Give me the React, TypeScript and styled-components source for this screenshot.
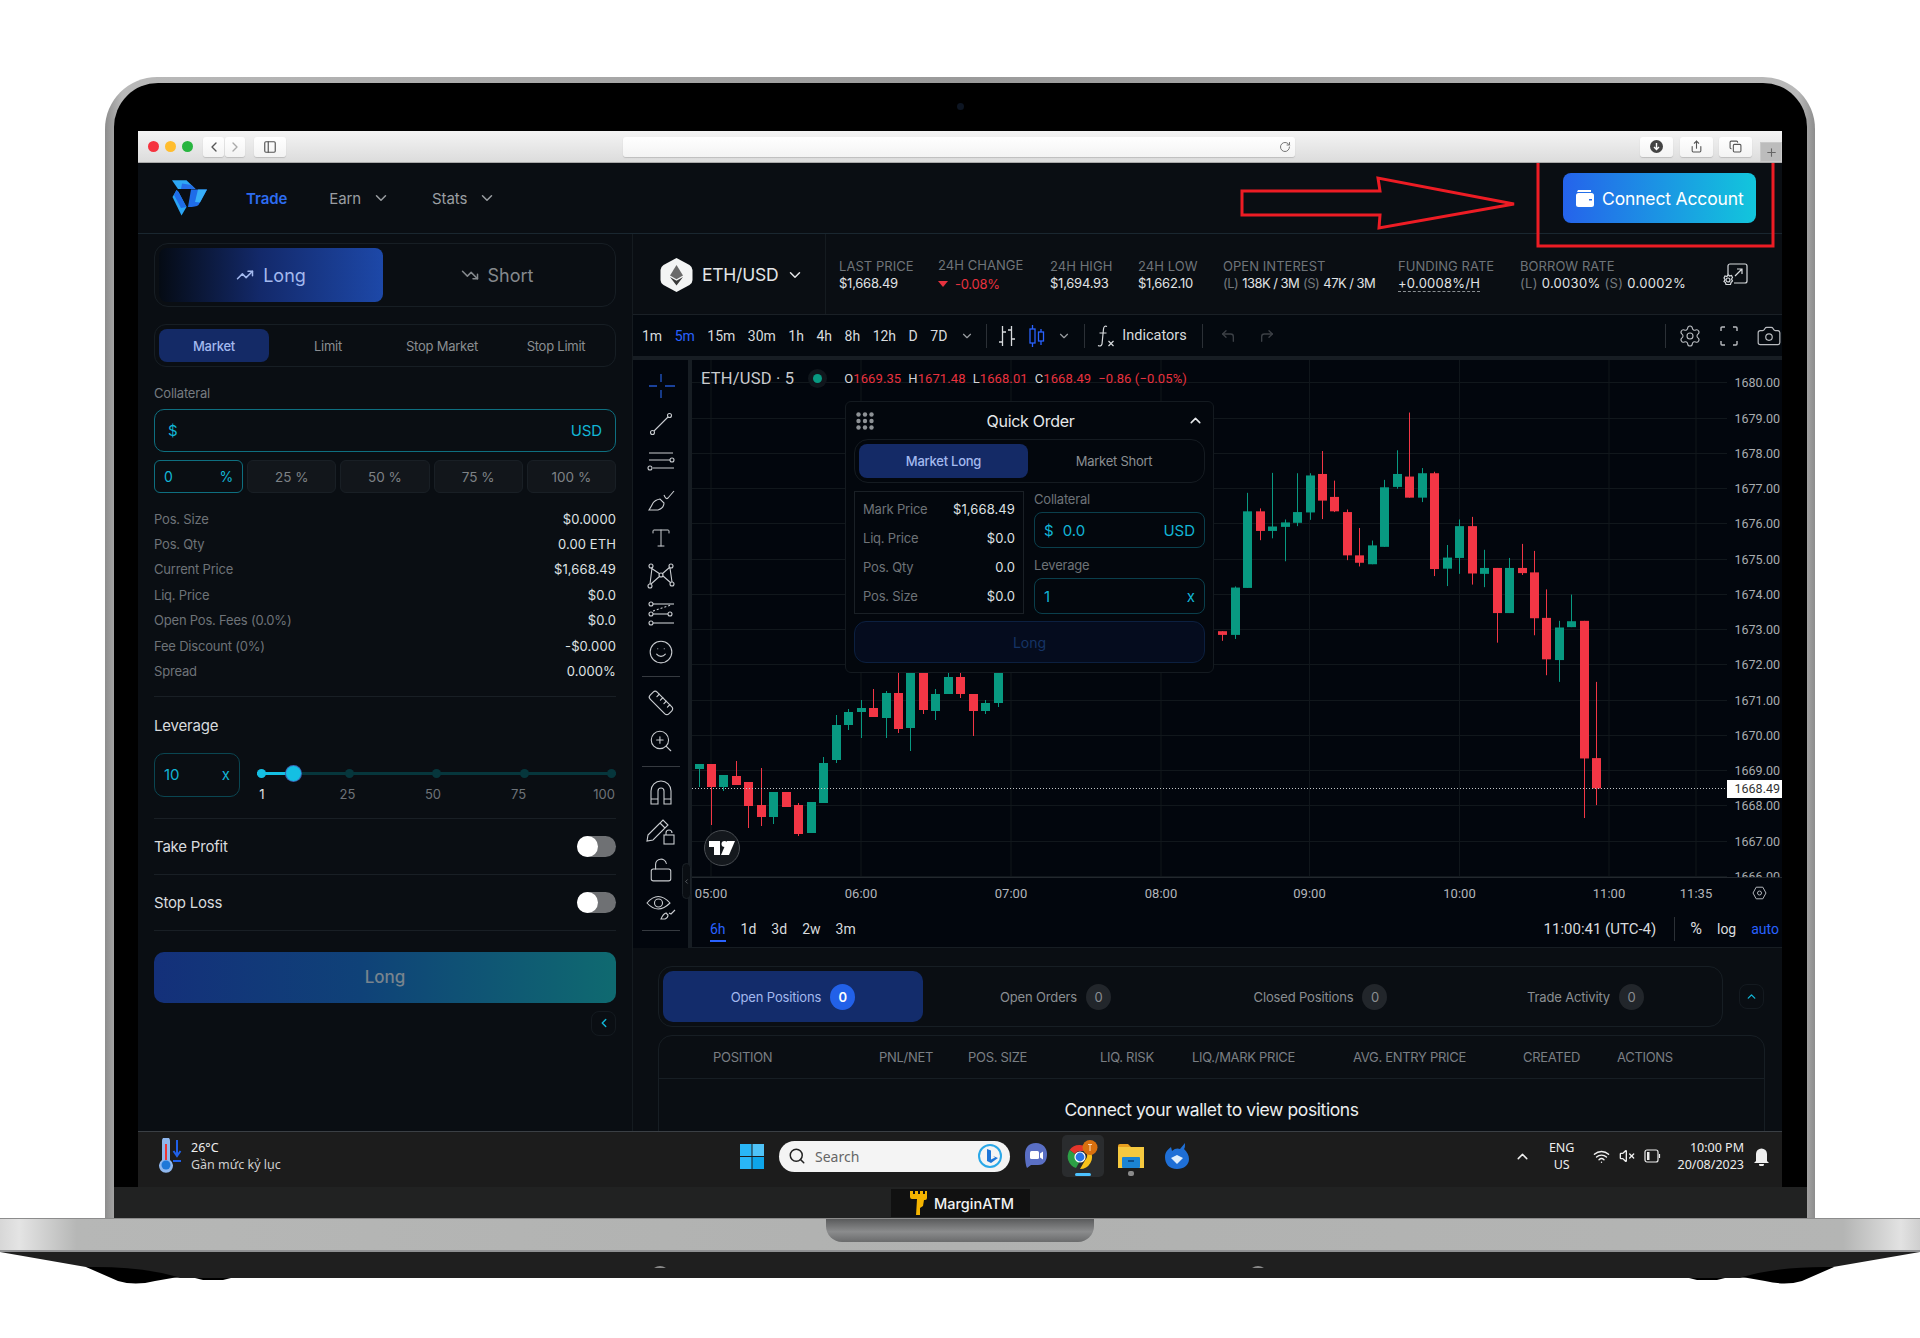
import React from "react";
import styled, { createGlobalStyle } from "styled-components";
import {
  TrendingUp, TrendingDown, ChevronDown, ChevronUp, ChevronLeft, ChevronRight, Settings, Camera,
  CornerUpLeft, CornerUpRight, LockOpen, ZoomIn, Ruler, Smile, Type, Search,
  Wifi, VolumeX, RotateCw, Share, Copy, PanelLeft, Plus,
} from "lucide-react";

const ui = `Inter, "Noto Sans", sans-serif`;
const tv = `Roboto, "Liberation Sans", sans-serif`;
const panel = "#0a0e13";
const line = "#171e24";
const cyan = "#12b5d6";

const Global = createGlobalStyle`
  html, body { margin: 0; padding: 0; background: #fff; }
  * { box-sizing: border-box; }
`;

const Page = styled.div`
  width: 1920px; height: 1338px; overflow: hidden; background: #fff;
  padding-top: 77px; display: flex; flex-direction: column; font-family: ${ui};
`;
const Lid = styled.div`
  width: 1710px; height: 1141px; margin-left: 105px; padding: 6px 8px 0 9px;
  border-radius: 52px 52px 0 0;
  background: linear-gradient(90deg, #8d8d8d, #b9b9b9 1%, #9a9a9a 50%, #b9b9b9 99%, #8d8d8d);
`;
const LidInner = styled.div`
  position: relative; height: 100%; background: #000; border-radius: 44px 44px 0 0;
  display: flex; flex-direction: column;
`;
const Camera2 = styled.span`
  position: absolute; left: 843px; top: 20px; width: 7px; height: 7px; border-radius: 50%;
  background: #0d1522;
`;
const ScreenWrap = styled.div`
  flex: 1; min-height: 0; padding: 48px 25px 0 24px; display: flex;
`;
const Screen = styled.div`
  flex: 1; display: flex; flex-direction: column; position: relative; overflow: hidden; background: ${panel};
`;
const Chin = styled.div`
  height: 31px; background: #212222; display: flex; justify-content: center; padding: 2px 0 0 0;
`;
const ChinBadge = styled.div`
  display: flex; align-items: center; gap: 7px; background: #111; padding: 0 16px 0 19px; height: 28px;
  color: #f2f2f2; font-size: 14.5px; font-weight: 500;
`;
const Base = styled.div`
  position: relative; height: 34px; flex: none;
  background: linear-gradient(90deg, #d7d7d7, #e4e4e4 1%, #b6b7b6 4%, #b0b1b0 50%, #b4b5b4 96%, #e2e2e2 99%, #cfcfcf);
  border-top: 1px solid #8c8c8c; border-bottom: 2px solid #8f9092;
`;
const Notch = styled.div`
  position: absolute; left: 826px; top: 0; width: 268px; height: 23px; border-radius: 0 0 16px 16px;
  background: linear-gradient(180deg, #5a5b5c, #8b8c8d 55%, #6a6b6c);
`;
const Underside = styled.svg`display: block; flex: none;`;

/* browser chrome */
const Chrome = styled.div`
  height: 32px; flex: none; display: flex; align-items: center; padding: 0 0 0 10px; position: relative;
  background: linear-gradient(180deg, #f4f4f4, #dcdcdc); border-bottom: 1px solid #aaa;
`;
const Light = styled.span<{ $c: string }>`
  width: 11px; height: 11px; border-radius: 50%; background: ${p => p.$c}; margin-right: 6px; flex: none;
`;
const CBtn = styled.span<{ $w: number; $ml?: number }>`
  width: ${p => p.$w}px; height: 20px; margin-left: ${p => p.$ml ?? 0}px; flex: none; border-radius: 3px; color: #555;
  background: linear-gradient(180deg, #fff, #f3f3f3); box-shadow: 0 1px 1px #bdbdbd;
  display: flex; align-items: center; justify-content: center; position: relative;
`;
const UrlBar = styled(CBtn)`justify-content: flex-end; padding-right: 4px; color: #777;`;
const NewTab = styled.span`
  position: absolute; right: 0; bottom: 0; width: 22px; height: 20px; background: #bcbcbc; color: #666;
  display: flex; align-items: center; justify-content: center; border: 1px solid #c9c9c9;
`;

/* header */
const Header = styled.header`
  height: 71px; flex: none; display: flex; align-items: center; padding-left: 34px; border-bottom: 1px solid #1a2730;
  position: relative;
`;
const NavLink = styled.a<{ $active?: boolean; $ml: number; $mr?: number }>`
  margin-left: ${p => p.$ml}px; margin-right: ${p => p.$mr ?? 0}px; font-size: 15px; letter-spacing: -0.1px;
  font-weight: ${p => (p.$active ? 600 : 400)}; color: ${p => (p.$active ? "#2d6cf0" : "#9a9ea2")};
`;
const NavChevron = styled(ChevronDown)`color: #9a9ea2; margin-left: 11px;`;
const Connect = styled.button`
  margin-left: auto; margin-right: 26px; width: 193px; height: 50px; border: 0; border-radius: 8px; color: #fff;
  background: linear-gradient(90deg, #2563eb, #12c6dc); font: 400 17.5px ${ui}; letter-spacing: -0.15px;
  display: flex; align-items: center; gap: 8px; padding-left: 13px;
`;
const ArrowMark = styled.svg`position: absolute; left: 1096px; top: 0; pointer-events: none;`;

const Body = styled.div`flex: 1; min-height: 0; display: flex;`;

/* left panel */
const Left = styled.aside`
  width: 495px; flex: none; padding: 9px 16px 0 16px; border-right: 1px solid #151b20; display: flex; flex-direction: column;
`;
const SideTabs = styled.div`
  height: 64px; border: 1px solid ${line}; border-radius: 14px; padding: 4px; display: grid; grid-template-columns: 224px 1fr;
`;
const SideTab = styled.div<{ $active?: boolean }>`
  border-radius: 8px; display: flex; align-items: center; justify-content: center; gap: 9px; font-size: 18px;
  color: ${p => (p.$active ? "#a3b9ee" : "#85898d")};
  background: ${p => (p.$active ? "linear-gradient(90deg, #050b14, #13296a 45%, #1d48a8)" : "transparent")};
`;
const OrderTabs = styled.div`
  margin-top: 17px; height: 43px; border: 1px solid ${line}; border-radius: 12px; padding: 4px;
  display: grid; grid-template-columns: repeat(4, 1fr); gap: 4px;
`;
const OTab = styled.div<{ $active?: boolean }>`
  border-radius: 8px; display: flex; align-items: center; justify-content: center; font-size: 13px; letter-spacing: -0.25px;
  color: ${p => (p.$active ? "#a3b9ee" : "#8a8e92")}; font-weight: ${p => (p.$active ? 500 : 400)};
  background: ${p => (p.$active ? "#142a66" : "transparent")};
`;
const FieldLabel = styled.div`font-size: 13px; color: #767b80; letter-spacing: -0.2px; line-height: 16px; margin-top: 18px;`;
const AmountInput = styled.div`
  margin-top: 8px; height: 43px; border: 1px solid #0e6f80; border-radius: 10px; display: flex; align-items: center;
  justify-content: space-between; padding: 0 13px; color: ${cyan}; font-size: 15px; letter-spacing: -0.1px;
`;
const PctRow = styled.div`margin-top: 8px; height: 33px; display: grid; grid-template-columns: repeat(5, 1fr); gap: 4px;`;
const PctInput = styled.div`
  border: 1px solid #0e6f80; border-radius: 6px; display: flex; align-items: center; justify-content: space-between;
  padding: 0 9px; color: ${cyan}; font-size: 14px;
`;
const PctBtn = styled.div`
  background: #12161b; border: 1px solid #191f25; border-radius: 6px; display: flex; align-items: center; justify-content: center;
  color: #7e8286; font-size: 13.5px;
`;
const Rows = styled.div`margin-top: 13px; display: flex; flex-direction: column;`;
const Row = styled.div`height: 25.4px; display: flex; align-items: center; justify-content: space-between; font-size: 13px; letter-spacing: -0.2px;`;
const RowLabel = styled.span`color: #6e7378;`;
const RowValue = styled.span`color: #dfe2e4; letter-spacing: 0.1px;`;
const Divider = styled.div<{ $mt?: number }>`height: 1px; background: #191f25; flex: none; margin-top: ${p => p.$mt ?? 0}px;`;
const LevTitle = styled.div`margin-top: 19px; font-size: 15px; line-height: 20px; color: #d8dbde; letter-spacing: -0.2px;`;
const LevRow = styled.div`margin-top: 17px; height: 44px; display: flex; margin-bottom: 21px;`;
const LevInput = styled.div`
  width: 86px; border: 1px solid #0a4652; border-radius: 10px; display: flex; align-items: center; justify-content: space-between;
  padding: 0 9px 0 9px; color: ${cyan}; font-size: 15px;
`;
const SliderBox = styled.div`flex: 1; margin-left: 15px; display: flex; flex-direction: column;`;
const Track = styled.div`
  position: relative; margin: 16px 0 0 2px; height: 9px; display: flex; justify-content: space-between; align-items: center;
  &::before { content: ""; position: absolute; left: 0; right: 0; top: 3px; height: 3px; background: #06363c; }
`;
const TrackFill = styled.span`position: absolute; left: 0; width: 36px; top: 3px; height: 3px; background: #14bfe3;`;
const Dot = styled.span<{ $on?: boolean }>`
  width: 9px; height: 9px; border-radius: 50%; position: relative; background: ${p => (p.$on ? "#14bfe3" : "#06363c")};
`;
const Thumb = styled.span`
  position: absolute; left: 29px; top: -3px; width: 15px; height: 15px; border-radius: 50%; background: #14bfe3; box-shadow: 0 0 0 1px #3a66b5;
`;
const SliderLabels = styled.div`
  display: flex; justify-content: space-between; margin-top: 8px; font-size: 13px; color: #6e7378; margin-left: -5px;
  & > span { width: 24px; text-align: center; }
  & > span:first-child { color: #dfe2e4; }
`;
const ToggleRow = styled.div<{ $h: number }>`
  height: ${p => p.$h}px; display: flex; align-items: center; justify-content: space-between; font-size: 15px; color: #d8dbde; letter-spacing: -0.2px;
`;
const Toggle = styled.span`
  width: 39px; height: 21px; border-radius: 11px; background: #6f7174; position: relative; display: flex;
  &::before { content: ""; width: 21px; height: 21px; border-radius: 50%; background: #fff; }
`;
const BigLong = styled.button`
  margin-top: 21px; height: 51px; border: 0; border-radius: 10px; width: 100%; color: #78848e;
  background: linear-gradient(90deg, #14307a, #0f4278 45%, #0f6a70); font: 500 17px ${ui};
`;
const MiniBtn = styled.span`
  width: 25px; height: 25px; border: 1px solid #141a20; border-radius: 8px; display: flex; align-items: center; justify-content: center;
  color: ${cyan}; flex: none;
`;
const Collapse = styled.div`margin-top: 8px; display: flex; justify-content: flex-end;`;

/* right panel */
const Right = styled.main`flex: 1; min-width: 0; display: flex; flex-direction: column;`;
const Stats = styled.div`height: 81px; flex: none; display: flex; align-items: center; border-bottom: 1px solid #1a2026;`;
const Pair = styled.div`
  width: 193px; height: 100%; flex: none; display: flex; align-items: center; padding: 1px 0 0 27px; border-right: 1px solid #151b20;
  color: #e3e5e7; font-size: 17.5px; letter-spacing: -0.25px; gap: 9px;
  & > svg:last-child { margin-left: -1px; }
`;
const StatList = styled.div`flex: 1; display: flex; padding: 2px 0 0 13px; align-items: center;`;
const Stat = styled.div<{ $w: number }>`
  width: ${p => p.$w}px; flex: none; font-size: 13px; line-height: 17px; white-space: nowrap;
`;
const StatLabel = styled.div`color: #6f7479; letter-spacing: 0.05px;`;
const StatValue = styled.div<{ $dash?: boolean; $ls?: number }>`
  color: #e0e3e5; display: inline-flex; gap: 4px; align-items: center; letter-spacing: ${p => p.$ls ?? -0.25}px;
  ${p => p.$dash && "border-bottom: 1px dashed #8a8f93; line-height: 15px;"}
`;
const Muted = styled.span`color: #74797e;`;
const Neg = styled.span`color: #e8323f;`;
const NegArrow = styled.span`width: 0; height: 0; border: 5px solid transparent; border-top: 6px solid #e8323f; border-bottom: 0; margin-right: 3px;`;

const Toolbar = styled.div`
  height: 41px; flex: none; display: flex; align-items: center; background: #04090f; padding-left: 9px; gap: 12.5px;
  font: 400 14px ${tv}; color: #d8dbde;
`;
const Tf = styled.span<{ $on?: boolean }>`color: ${p => (p.$on ? "#2962ff" : "#d8dbde")};`;
const ToolSep = styled.span<{ $ml?: number; $mr?: number }>`
  width: 1px; height: 24px; background: #2b3036; margin-left: ${p => p.$ml ?? 0}px; margin-right: ${p => p.$mr ?? 0}px;
`;
const BarsSlot = styled.span`display: flex; align-items: center; gap: 12px; margin-left: -3px;`;
const ToolIcons = styled.span`display: flex; align-items: center; gap: 18px; color: #b9bcc0; margin-left: auto;`;
const Undo = styled.span`display: flex; gap: 23px; color: #3c4046; margin-left: 4px;`;
const Indicators = styled.span`display: flex; align-items: center; gap: 7px; font-size: 14.5px;`;
const Strip = styled.div`height: 4px; flex: none; background: #171d23;`;

const ChartArea = styled.div`height: 588px; flex: none; display: flex; background: #02060d; position: relative;`;
const ToolCol = styled.div`
  flex: none; display: flex; flex-direction: column; align-items: center; padding-top: 7px; color: #c9ccd0;
  border-right: 4px solid #171d23; width: 59px;
`;
const ToolSlot = styled.span<{ $h?: number; $on?: boolean }>`
  height: ${p => p.$h ?? 38}px; flex: none; display: flex; align-items: center; justify-content: center;
  color: ${p => (p.$on ? "#2356c9" : "#c9ccd0")};
`;
const ToolRule = styled.span`width: 38px; height: 1px; background: #363a40; flex: none; margin: 5px 0 8px;`;
const Handle = styled.span`
  position: absolute; left: 49px; top: 503px; width: 9px; height: 36px; background: #0a0e13; border: 1px solid #1c2228; border-radius: 5px;
  color: #8a8e92; display: flex; align-items: center; justify-content: center;
`;
const Stage = styled.div`position: relative; flex: 1; min-width: 0; display: flex; flex-direction: column;`;
const ChartSvg = styled.svg`display: block; flex: none;`;
const Legend = styled.div`
  position: absolute; left: 9px; top: 9px; display: flex; align-items: center; font-family: ${tv}; color: #c9cbce;
`;
const LegendTitle = styled.span`font-size: 16.5px; letter-spacing: 0.2px;`;
const Live = styled.span`
  width: 19px; height: 19px; border-radius: 50%; background: #10161c; margin: 0 17px 0 14px; display: flex; align-items: center; justify-content: center;
  &::before { content: ""; width: 9px; height: 9px; border-radius: 50%; background: #089981; }
`;
const Ohlc = styled.span`font-size: 13px; letter-spacing: 0.1px; color: #d2d4d6; display: flex; gap: 7px;`;
const TvLogo = styled.span`
  position: absolute; left: 12px; top: 470px; width: 36px; height: 36px; border-radius: 50%; background: #14181d; border: 1px solid #4a4e53;
  display: flex; align-items: center; justify-content: center;
`;

const Quick = styled.section`
  position: absolute; left: 153px; top: 41px; width: 369px; height: 272px; background: #03070d; border: 1px solid #141a20; border-radius: 6px;
  padding: 0 8px; display: flex; flex-direction: column; font-family: ${ui};
`;
const QHead = styled.div`
  height: 37px; display: flex; align-items: center; justify-content: space-between; color: #e6e8ea; font-size: 16px; letter-spacing: -0.3px; padding: 0 1px 0 2px;
`;
const QTabs = styled.div`
  height: 44px; border: 1px solid #151b21; border-radius: 14px; padding: 4px; display: grid; grid-template-columns: 169px 1fr;
`;
const QBody = styled.div`margin-top: 8px; display: grid; grid-template-columns: 170px 171px; gap: 10px;`;
const QInfo = styled.div`
  height: 123px; border: 1px solid #1a2026; padding: 2px 8px; display: flex; flex-direction: column; justify-content: space-around;
`;
const QFields = styled.div`display: flex; flex-direction: column;`;
const QLabel = styled.div`font-size: 13px; color: #6e7378; line-height: 16px; letter-spacing: -0.2px;`;
const QInput = styled.div`
  height: 36px; margin: 5px 0 9px; border: 1px solid #0a3f4c; border-radius: 8px; display: flex; align-items: center; justify-content: space-between;
  padding: 0 9px; color: ${cyan}; font-size: 15px;
  &:last-child { margin-bottom: 0; }
`;
const QValue = styled.span`display: flex; gap: 9px;`;
const QLong = styled.div`
  margin-top: 7px; height: 42px; background: #050c1e; border: 1px solid #0c2040; border-radius: 12px; color: #153466;
  display: flex; align-items: center; justify-content: center; font-size: 14px;
`;

const RangeRow = styled.div`
  flex: 1; display: flex; align-items: center; padding: 0 3px 2px 18px; font: 400 14px ${tv}; color: #d8dbde; gap: 15px; border-bottom: 1px solid #171d23;
`;
const Range = styled.span<{ $on?: boolean }>`
  position: relative; color: ${p => (p.$on ? "#2962ff" : "#d8dbde")};
  ${p => p.$on && `&::after { content: ""; position: absolute; left: 0; right: 0; bottom: -5px; height: 2px; background: #2962ff; }`}
`;
const RangeRight = styled.span`margin-left: auto; display: flex; align-items: center; gap: 15px;`;
const Clock2 = styled.span`font-size: 15px;`;
const Pct = styled.span`font-size: 16px;`;

const Bottom = styled.section`flex: 1; min-height: 0; overflow: hidden; padding: 18px 17px 0 25px;`;
const PosTop = styled.div`display: flex; align-items: center; gap: 16px;`;
const PosTabs = styled.div`
  width: 1065px; height: 61px; border: 1px solid ${line}; border-radius: 14px; padding: 4px; display: grid; grid-template-columns: 260px 1fr 1fr 1fr;
`;
const PosTab = styled.div<{ $active?: boolean }>`
  border-radius: 10px; display: flex; align-items: center; justify-content: center; gap: 9px; font-size: 13px; letter-spacing: -0.15px;
  color: ${p => (p.$active ? "#a3b9ee" : "#8a8e92")}; background: ${p => (p.$active ? "#132c6b" : "transparent")};
`;
const Badge = styled.span<{ $active?: boolean }>`
  width: 25px; height: 26px; border-radius: 50%; display: flex; align-items: center; justify-content: center; font-size: 13px;
  color: ${p => (p.$active ? "#fff" : "#8a8e92")}; background: ${p => (p.$active ? "#2261e8" : "#22262b")}; font-weight: ${p => (p.$active ? 600 : 400)};
`;
const Table = styled.div`margin-top: 8px; border: 1px solid ${line}; border-radius: 14px 14px 0 0; height: 130px;`;
const THead = styled.div`height: 43px; position: relative; display: grid; align-items: center; border-bottom: 1px solid ${line};
  grid-template-columns: 166px 89px 132px 92px 161px 170px 94px 1fr; padding-left: 54px;
  font-size: 13px; letter-spacing: -0.3px; color: #7a7f84;`;
const Empty = styled.div`margin-top: 20px; text-align: center; color: #eceef0; font-size: 17.5px; letter-spacing: -0.4px;`;

/* taskbar */
const Taskbar = styled.footer`
  height: 56px; flex: none; background: #1c1c1c; border-top: 1px solid #3a3f44; display: flex; align-items: center; position: relative;
  padding-bottom: 7px; font-family: "Noto Sans", ${ui}; color: #eee; font-size: 12.5px;
`;
const Weather = styled.div`display: flex; align-items: center; gap: 9px; margin-left: 20px; width: 582px; line-height: 17px; flex: none;`;
const WeatherSub = styled.div`color: #cfcfcf;`;
const SearchPill = styled.div`
  width: 231px; height: 31px; margin-left: 15px; border-radius: 16px; background: #f4f4f4; color: #666; display: flex; align-items: center;
  padding: 0 8px 0 9px; gap: 9px; font-size: 14px; flex: none;
`;
const PillGap = styled.span`flex: 1;`;
const AppSlot = styled.span<{ $w: number; $on?: boolean; $mark?: string }>`
  width: ${p => p.$w}px; height: 42px; flex: none; display: flex; align-items: center; justify-content: center; position: relative; border-radius: 5px;
  background: ${p => (p.$on ? "#2a2c2e" : "transparent")};
  ${p => p.$mark && `&::after { content: ""; position: absolute; bottom: 1px; left: 50%; transform: translateX(-50%); width: ${p.$on ? 16 : 6}px; height: ${p.$on ? 3 : 5}px; border-radius: 2px; background: ${p.$mark}; }`}
`;
const Tray = styled.div`margin-left: auto; display: flex; align-items: center; padding-right: 13px; color: #eee;`;
const Lang = styled.div`text-align: center; line-height: 17px; margin: 0 19px 0 18px;`;
const TrayIcons = styled.div`display: flex; align-items: center; gap: 9px; margin-right: 16px;`;
const Clock = styled.div`text-align: right; line-height: 17px; margin-right: 10px;`;

/* ---- data ---- */
const G = "#089981", R = "#f23645";
type C = [number, string, number, number, number, number];
const z = (p: number) => 380 + p / 2.703;
const leftC: C[] = [
  [0, G, 764, 769, 764, 787], [1, R, 764, 787, 764, 825], [2, G, 775, 787, 775, 791], [3, R, 776, 785, 761, 785],
  [4, R, 782, 806, 782, 828], [5, R, 805, 817, 768, 826], [6, G, 792, 817, 792, 824], [7, R, 792, 807, 792, 807],
  [8, R, 805, 834, 803, 836], [9, G, 802, 833, 802, 833], [10, G, 763, 803, 757, 803], [11, G, 725, 760, 715, 763],
  [12, G, 712, 725, 709, 730], [13, G, 708, 712, 700, 738], [14, R, 708, 717, 689, 717], [15, G, 693, 718, 691, 738],
  [16, R, 693, 729, 670, 733], [17, G, 660, 728, 660, 751], [18, R, 660, 710, 660, 714], [19, G, 694, 711, 689, 720],
  [20, G, 677, 694, 670, 694], [21, R, 677, 694, 670, 698], [22, R, 694, 711, 694, 736], [23, G, 703, 711, 700, 714],
  [24, G, 660, 703, 660, 707],
];
const rightRaw: C[] = [
  [42, R, 679, 689, 679, 705], [43, G, 561, 689, 558, 700], [44, G, 355, 562, 305, 562], [45, R, 355, 408, 347, 433],
  [46, G, 396, 408, 251, 428], [47, G, 385, 397, 377, 490], [48, G, 357, 386, 252, 395], [49, G, 258, 358, 252, 378],
  [50, R, 254, 326, 192, 376], [51, R, 316, 355, 272, 357], [52, R, 357, 474, 350, 487], [53, R, 474, 494, 400, 504],
  [54, G, 447, 498, 434, 498], [55, G, 290, 451, 270, 451], [56, G, 254, 289, 190, 294], [57, R, 261, 318, 88, 318],
  [58, G, 252, 318, 238, 330], [59, R, 252, 511, 248, 530], [60, G, 480, 510, 446, 557], [61, G, 395, 481, 377, 524],
  [62, R, 395, 523, 370, 553], [63, G, 508, 524, 459, 560], [64, R, 508, 630, 508, 710], [65, G, 508, 630, 481, 630],
  [66, R, 508, 522, 443, 527], [67, R, 520, 644, 462, 690], [68, R, 643, 755, 566, 798], [69, G, 669, 757, 651, 816],
  [70, G, 652, 668, 580, 668], [71, R, 651, 1023, 651, 1184], [72, R, 1022, 1104, 816, 1149],
];
const candles: C[] = [...leftC, ...rightRaw.map(([i, c, a, b, d, e]) => [i, c, z(a), z(b), z(d), z(e)] as C)];
const cx = (i: number) => Math.round(698.5 + i * 12.47);
const prices = [1680, 1679, 1678, 1677, 1676, 1675, 1674, 1673, 1672, 1671, 1670, 1669, 1668, 1667, 1666];
const py = (p: number) => 805.4 + (1668 - p) * 35.25;
const times: [number, string][] = [[711, "05:00"], [861, "06:00"], [1011, "07:00"], [1161, "08:00"], [1309.5, "09:00"], [1459.5, "10:00"], [1609, "11:00"], [1696, "11:35"]];

const Chart = () => (
  <ChartSvg width={1090} height={552} viewBox="692 360 1090 552">
    {times.map(([x]) => <line key={x} x1={x} x2={x} y1={360} y2={878} stroke="#10161b" />)}
    {prices.map(p => <line key={p} x1={692} x2={1727} y1={Math.round(py(p)) + 0.5} y2={Math.round(py(p)) + 0.5} stroke="#11171c" />)}
    {candles.map(([i, c, a, b, d, e]) => (
      <g key={i}>
        <line x1={cx(i) + 0.5} x2={cx(i) + 0.5} y1={d} y2={e} stroke={c} />
        <rect x={cx(i) - 4} y={a} width={9} height={Math.max(b - a, 2)} fill={c} />
      </g>
    ))}
    <line x1={692} x2={1727} y1={788.5} y2={788.5} stroke="#c4c6c8" strokeDasharray="1 2" />
    <g fontFamily={tv} fontSize={12.5} fill="#a9acb0" textAnchor="end">
      {prices.map(p => <text key={p} x={1780} y={py(p) + 5}>{p}.00</text>)}
    </g>
    <rect x={692} y={877} width={1090} height={35} fill="#02060d" />
    <line x1={692} x2={1782} y1={877.5} y2={877.5} stroke="#23282e" />
    <rect x={1727} y={780} width={55} height={18} fill="#fff" />
    <text x={1780} y={793} fontFamily={tv} fontSize={12.5} fill="#333" textAnchor="end">1668.49</text>
    <g fontFamily={tv} fontSize={13} fill="#b2b5ba" textAnchor="middle">
      {times.map(([x, t]) => <text key={t} x={x} y={898}>{t}</text>)}
    </g>
    <path d="M1753 893l3.2-5.8h6.6l3.2 5.8-3.2 5.8h-6.6z" fill="none" stroke="#b2b5ba" />
    <circle cx={1759.5} cy={893} r={2} fill="none" stroke="#b2b5ba" />
  </ChartSvg>
);

const Ico = styled.svg`display: block; flex: none;`;
const S = { fill: "none", stroke: "currentColor", strokeWidth: 1.1 };

const Logo = () => (
  <Ico width={36} height={36} viewBox="7 8 36 36">
    <path d="M7 8.300H21.500L30.500 17H13Z" fill="#2ea8f5" />
    <path d="M17 11.500L26.500 13 30.500 17H16Z" fill="#2670e8" />
    <path d="M26 17.500H42L33.500 33Q31 35 23 35Z" fill="#1f6ce8" />
    <path d="M33 17.500H42L35 30.500 30 30Z" fill="#37aef8" />
    <path d="M11.500 18L7.500 25 16.500 43.500 21.500 35 13.500 20Z" fill="#2aa5f5" />
    <path d="M11.500 18L9 23 16 36 21.500 35 13.500 20Z" fill="#1f6ce8" />
  </Ico>
);
const Eth = () => (
  <Ico width={33} height={36} viewBox="0 0 33 36">
    <path d="M16.500 1l13 7q3 2 3 5v10q0 3-3 5l-13 7-13-7q-3-2-3-5V13q0-3 3-5z" fill="#f3f4f4" />
    <path d="M16.500 8l-6.500 10.500 6.500 3.800 6.500-3.800z" fill="#6a6a6a" />
    <path d="M10 20l6.500 8.500 6.500-8.500-6.500 3.800z" fill="#3a3a3a" />
  </Ico>
);
const Wallet2 = () => (
  <Ico width={18} height={17} viewBox="0 0 18 17">
    <path d="M2 0h13v2H1z" fill="#fff" />
    <rect y={3} width={18} height={14} rx={2.500} fill="#fff" />
    <rect x={13} y={9} width={3} height={1.500} fill="#2a6ae8" />
  </Ico>
);
const Dots = () => (
  <Ico width={18} height={18} viewBox="0 0 18 18" fill="#8e9296">
    {[2.500, 9, 15.500].flatMap(y => [2.500, 9, 15.500].map(x => <circle key={`${x}-${y}`} cx={x} cy={y} r={2.200} />))}
  </Ico>
);
const SettingsLink = () => (
  <Ico width={28} height={26} viewBox="0 0 28 26" {...S} strokeWidth={1.200} style={{ color: "#d8dbde" }}>
    <path d="M7 12V4a2 2 0 0 1 2-2h15a2 2 0 0 1 2 2v15a2 2 0 0 1-2 2H13" />
    <path d="M14 14l7-7m-5 0h5v5" />
    <circle cx={7} cy={18} r={2} />
    <path d="M7 12.500l1.500 1.500 2-.500 1 2-1 1.500 1 2-1.500 1.500-.500 2H5l-.500-2L3 19.500l1-2-1-1.500 1-2 2 .500z" />
  </Ico>
);
const BarsIco = () => (
  <Ico width={20} height={24} viewBox="0 0 20 24" {...S} strokeWidth={1.300}>
    <path d="M5.500 2v20M2 18h3.500M5.500 8H9M14.500 2v20M11 6h3.500M14.500 15H18" />
  </Ico>
);
const CandleIco = () => (
  <Ico width={16} height={24} viewBox="0 0 16 24" stroke="#2962ff" fill="none" strokeWidth={1.300}>
    <path d="M3.500 1v22M12 5v16" /><rect x={1} y={5} width={5} height={14} fill="#02060d" /><rect x={9.500} y={8} width={5} height={9} fill="#02060d" />
  </Ico>
);
const Fx = () => (
  <Ico width={18} height={24} viewBox="0 0 18 24" {...S} strokeWidth={1.200}>
    <path d="M10 2.500Q7 1 6.500 5l-1.500 15Q4 23 1 21.500M2.500 9H9.500M11.500 17l5 5m0-5l-5 5" />
  </Ico>
);
const Full = () => (
  <Ico width={18} height={20} viewBox="0 0 18 20" {...S} strokeWidth={1.400}>
    <path d="M1 5V2a1 1 0 0 1 1-1h3M13 1h3a1 1 0 0 1 1 1v3M17 15v3a1 1 0 0 1-1 1h-3M5 19H2a1 1 0 0 1-1-1v-3" />
  </Ico>
);
const Cross = () => (
  <Ico width={28} height={28} viewBox="0 0 28 28" stroke="#2356c9" fill="none" strokeWidth={1.300}>
    <path d="M14 2v8M14 18v8M2 14h8M18 14h10" />
  </Ico>
);
const TrendLine = () => (
  <Ico width={28} height={28} viewBox="0 0 28 28" {...S}>
    <path d="M7 21L21 7" /><circle cx={5.500} cy={22.500} r={2} /><circle cx={22.500} cy={5.500} r={2} />
  </Ico>
);
const Lines = () => (
  <Ico width={28} height={28} viewBox="0 0 28 28" {...S}>
    <path d="M2 5h24M2 12h21M6 20h21" /><circle cx={25} cy={12} r={2} /><circle cx={3} cy={20} r={2} />
  </Ico>
);
const Brush = () => (
  <Ico width={28} height={28} viewBox="0 0 28 28" {...S}>
    <path d="M2 24h9q6-2 6-7l-4-4q-5 1-7 4-2 4-4 7zM17 9q2 5 4 3l6-7" />
  </Ico>
);
const Nodes = () => (
  <Ico width={28} height={28} viewBox="0 0 28 28" {...S}>
    <circle cx={4} cy={4} r={2} /><circle cx={24} cy={4} r={2} /><circle cx={3} cy={24} r={2} /><circle cx={25} cy={22} r={2} /><circle cx={14} cy={13} r={2} />
    <path d="M4 6l9 6M15 12l8-7M4 22l9-8M16 14l8 7M3 22L5 6M25 20L23 6" />
  </Ico>
);
const Fib = () => (
  <Ico width={28} height={28} viewBox="0 0 28 28" {...S}>
    <circle cx={4} cy={4} r={2} /><path d="M6 4h21" /><circle cx={4} cy={14} r={2} /><circle cx={23} cy={14} r={2} /><path d="M6 14h15" /><path d="M6 11l18-6" strokeDasharray="2 2" />
    <circle cx={4} cy={23} r={2} /><path d="M6 23h21" />
  </Ico>
);
const MagnetIco = () => (
  <Ico width={26} height={28} viewBox="0 0 26 28" {...S}>
    <path d="M3 25V12a10 10 0 0 1 20 0v13h-7V12a3 3 0 0 0-6 0v13zM3 20h7M16 20h7" />
  </Ico>
);
const PencilLock = () => (
  <Ico width={30} height={30} viewBox="0 0 30 30" {...S}>
    <path d="M2 19L17 4l5 5L7 24l-6 1zM14 7l5 5" /><rect x={18} y={19} width={10} height={9} /><path d="M20 19v-2a3 3 0 0 1 6 0" />
  </Ico>
);
const EyeBrush = () => (
  <Ico width={30} height={30} viewBox="0 0 30 30" {...S}>
    <path d="M1 11Q12-2 24 11 12 23 1 11z" /><circle cx={12.500} cy={11} r={4} /><path d="M15 27h4q3-1 3-4l-2-2q-3 1-5 6zM23 21l2 1 4-4" />
  </Ico>
);
const TvMark = () => (
  <Ico width={26} height={14} viewBox="0 0 26 14" fill="#fff">
    <path d="M0 0h11v14H5V6H0z" /><circle cx={15.500} cy={3} r={3} /><path d="M18 0h8l-6 14h-8z" />
  </Ico>
);
const WinLogo = () => (
  <Ico width={24} height={25} viewBox="0 0 24 25">
    <rect width={11.500} height={12} fill="#29b6f6" /><rect x={12.500} width={11.500} height={12} fill="#4fc3f7" />
    <rect y={13} width={11.500} height={12} fill="#29b6f6" /><rect x={12.500} y={13} width={11.500} height={12} fill="#0ea5e9" />
  </Ico>
);
const Bing = () => (
  <Ico width={24} height={26} viewBox="0 0 24 26">
    <circle cx={12} cy={13} r={11} fill="none" stroke="#2aa8e8" strokeWidth={2} />
    <path d="M9 6l4 1.500v9l4-2-2-1.500 5 2-7 5-4-2z" fill="#1d75d8" />
  </Ico>
);
const Meet = () => (
  <Ico width={24} height={28} viewBox="0 0 24 28">
    <path d="M12 1C4 1 1 6 1 13c0 6 1 11 2 13l4-3h7c7 0 9-5 9-11S19 1 12 1z" fill="#5a6fc4" />
    <rect x={6} y={9} width={9} height={8} rx={1.500} fill="#fff" /><path d="M16 11.500l3-2v8l-3-2z" fill="#fff" />
  </Ico>
);
const ChromeIco = () => (
  <Ico width={34} height={34} viewBox="0 0 34 34">
    <path d="M14 6a12 12 0 0 1 10.400 6H14a6 6 0 0 0-5.200 3L3.600 11A12 12 0 0 1 14 6z" fill="#e4352b" />
    <path d="M3.600 11a12 12 0 0 0 6.400 18l5-9a6 6 0 0 1-6.200-5z" fill="#2c9f45" />
    <path d="M24.400 12a12 12 0 0 1-10.400 18l5.200-9a6 6 0 0 0 0-9z" fill="#f9c21a" />
    <circle cx={14} cy={18} r={5} fill="#2a74e6" stroke="#fff" strokeWidth={1.200} />
    <circle cx={24} cy={8.500} r={7.500} fill="#d9700f" />
    <rect x={23.500} y={5} width={1} height={7} fill="#ffd9b0" /><rect x={22} y={5} width={4} height={1} fill="#ffd9b0" />
  </Ico>
);
const Folder = () => (
  <Ico width={26} height={24} viewBox="0 0 26 24">
    <path d="M0 2q0-2 2-2h8l3 3H0z" fill="#e8a020" /><rect y={3} width={26} height={21} fill="#f6c93f" /><rect x={4} y={13} width={18} height={11} rx={1} fill="#1b84d4" /><rect x={10} y={16} width={6} height={2} fill="#0d4f8c" />
  </Ico>
);
const Bird = () => (
  <Ico width={24} height={28} viewBox="0 0 24 28">
    <path d="M12 27C4 27 0 22 0 15 0 9 4 7 6 5l1 4c3-3 6-3 8-2l5-6c0 3 0 5-1 6 3 3 5 6 5 10 0 6-5 10-12 10z" fill="#1f6fd6" />
    <path d="M12 13l6 3-6 6-6-6z" fill="#dfeefc" />
  </Ico>
);
const Thermo = () => (
  <Ico width={24} height={36} viewBox="0 0 24 36">
    <path d="M4 3a4 4 0 0 1 8 0v19a7 7 0 1 1-8 0z" fill="#8fb7ee" />
    <rect x={7} y={6} width={2} height={16} fill="#e33" /><circle cx={8} cy={27} r={4.500} fill="#1f78d8" />
    <path d="M19 2v15M15.500 13l3.500 5 3.500-5M15 23h8" stroke="#2060e8" strokeWidth={2} fill="none" />
  </Ico>
);
const Battery = () => (
  <Ico width={17} height={16} viewBox="0 0 17 16" fill="none" stroke="#eee" strokeWidth={1.200}>
    <rect x={1} y={2} width={13} height={12} rx={2} /><rect x={3} y={4} width={2.500} height={8} fill="#eee" stroke="none" /><path d="M15.500 6v4" />
  </Ico>
);
const Snooze = () => (
  <Ico width={15} height={20} viewBox="0 0 15 20" fill="#eee">
    <path d="M2 15V8a5.500 5.500 0 0 1 11 0v7l2 2H0zM5 18h5a2.500 2.500 0 0 1-5 0z" />
  </Ico>
);
const Castle = () => (
  <Ico width={17} height={24} viewBox="0 0 17 24" fill="#f5b400">
    <path d="M0 0h3v3h2V0h3v3h2V0h3v3h2v-3h2v7q0 2-2 2h-1l-1 6-3 2v8H6L7 8H2Q0 8 0 6z" />
  </Ico>
);

const tfs = ["1m", "5m", "15m", "30m", "1h", "4h", "8h", "12h", "D", "7D"];
const rows = [
  ["Pos. Size", "$0.0000"], ["Pos. Qty", "0.00 ETH"], ["Current Price", "$1,668.49"], ["Liq. Price", "$0.0"],
  ["Open Pos. Fees (0.0%)", "$0.0"], ["Fee Discount (0%)", "-$0.000"], ["Spread", "0.000%"],
];
const qrows = [["Mark Price", "$1,668.49"], ["Liq. Price", "$0.0"], ["Pos. Qty", "0.0"], ["Pos. Size", "$0.0"]];
const heads = ["POSITION", "PNL/NET", "POS. SIZE", "LIQ. RISK", "LIQ./MARK PRICE", "AVG. ENTRY PRICE", "CREATED", "ACTIONS"];

export default function App() {
  return (
    <Page>
      <Global />
      <Lid>
        <LidInner>
          <Camera2 />
          <ScreenWrap>
            <Screen>
              <Chrome>
                <Light $c="#f5333f" /><Light $c="#ffbd2e" /><Light $c="#27b53f" />
                <CBtn $w={21} $ml={4}><ChevronLeft size={16} /></CBtn>
                <CBtn $w={20} $ml={1}><ChevronRight size={16} color="#aaa" /></CBtn>
                <CBtn $w={32} $ml={9}><PanelLeft size={14} /></CBtn>
                <UrlBar $w={672} $ml={337}><RotateCw size={12} /></UrlBar>
                <CBtn $w={33} $ml={345}><svg width="13" height="13" viewBox="0 0 13 13"><circle cx="6.500" cy="6.500" r="6.500" fill="#444" /><path d="M6.500 3v6M4 7l2.500 2.500L9 7" stroke="#fff" strokeWidth="1.400" fill="none" /></svg></CBtn>
                <CBtn $w={33} $ml={7}><Share size={13} /></CBtn>
                <CBtn $w={33} $ml={6}><Copy size={13} /></CBtn>
                <NewTab><Plus size={13} /></NewTab>
              </Chrome>
              <Header>
                <Logo />
                <NavLink $active $ml={38}>Trade</NavLink>
                <NavLink $ml={42}>Earn</NavLink>
                <NavChevron size={18} />
                <NavLink $ml={42}>Stats</NavLink>
                <NavChevron size={18} />
                <Connect><Wallet2 />Connect Account</Connect>
                <ArrowMark width={548} height={85} viewBox="0 0 548 85" fill="none" stroke="#ed1c24" strokeWidth="3">
                  <path d="M8 28h138l-2-13 136 26-135 24 1-13H8z" />
                  <path d="M304 0v83h235V0" />
                </ArrowMark>
              </Header>
              <Body>
                <Left>
                  <SideTabs>
                    <SideTab $active><TrendingUp size={18} />Long</SideTab>
                    <SideTab><TrendingDown size={18} />Short</SideTab>
                  </SideTabs>
                  <OrderTabs>
                    <OTab $active>Market</OTab><OTab>Limit</OTab><OTab>Stop Market</OTab><OTab>Stop Limit</OTab>
                  </OrderTabs>
                  <FieldLabel>Collateral</FieldLabel>
                  <AmountInput><span>$</span><span>USD</span></AmountInput>
                  <PctRow>
                    <PctInput><span>0</span><span>%</span></PctInput>
                    <PctBtn>25 %</PctBtn><PctBtn>50 %</PctBtn><PctBtn>75 %</PctBtn><PctBtn>100 %</PctBtn>
                  </PctRow>
                  <Rows>
                    {rows.map(([a, b]) => <Row key={a}><RowLabel>{a}</RowLabel><RowValue>{b}</RowValue></Row>)}
                  </Rows>
                  <Divider $mt={12} />
                  <LevTitle>Leverage</LevTitle>
                  <LevRow>
                    <LevInput><span>10</span><span>x</span></LevInput>
                    <SliderBox>
                      <Track>
                        <TrackFill />
                        <Dot $on /><Dot /><Dot /><Dot /><Dot />
                        <Thumb />
                      </Track>
                      <SliderLabels><span>1</span><span>25</span><span>50</span><span>75</span><span>100</span></SliderLabels>
                    </SliderBox>
                  </LevRow>
                  <Divider />
                  <ToggleRow $h={55}>Take Profit<Toggle /></ToggleRow>
                  <Divider />
                  <ToggleRow $h={55}>Stop Loss<Toggle /></ToggleRow>
                  <Divider />
                  <BigLong>Long</BigLong>
                  <Collapse><MiniBtn><ChevronLeft size={14} strokeWidth={2.500} /></MiniBtn></Collapse>
                </Left>
                <Right>
                  <Stats>
                    <Pair><Eth />ETH/USD<ChevronDown size={18} /></Pair>
                    <StatList>
                      <Stat $w={99}><StatLabel>LAST PRICE</StatLabel><StatValue>$1,668.49</StatValue></Stat>
                      <Stat $w={112}><StatLabel>24H CHANGE</StatLabel><StatValue><NegArrow /><Neg>-0.08%</Neg></StatValue></Stat>
                      <Stat $w={88}><StatLabel>24H HIGH</StatLabel><StatValue>$1,694.93</StatValue></Stat>
                      <Stat $w={85}><StatLabel>24H LOW</StatLabel><StatValue>$1,662.10</StatValue></Stat>
                      <Stat $w={175}><StatLabel>OPEN INTEREST</StatLabel><StatValue $ls={-0.55}><Muted>(L)</Muted>138K / 3M <Muted>(S)</Muted>47K / 3M</StatValue></Stat>
                      <Stat $w={122}><StatLabel>FUNDING RATE</StatLabel><StatValue $dash $ls={0.25}>+0.0008%/H</StatValue></Stat>
                      <Stat $w={201}><StatLabel>BORROW RATE</StatLabel><StatValue $ls={0.3}><Muted>(L)</Muted>0.0030% <Muted>(S)</Muted>0.0002%</StatValue></Stat>
                      <SettingsLink />
                    </StatList>
                  </Stats>
                  <Toolbar>
                    {tfs.map(t => <Tf key={t} $on={t === "5m"}>{t}</Tf>)}
                    <ChevronDown size={14} color="#9a9ea2" />
                    <ToolSep />
                    <BarsSlot><BarsIco /><CandleIco /></BarsSlot>
                    <ChevronDown size={14} color="#9a9ea2" />
                    <ToolSep />
                    <Indicators><Fx />Indicators</Indicators>
                    <ToolSep $ml={3} />
                    <Undo><CornerUpLeft size={16} /><CornerUpRight size={16} /></Undo>
                    <ToolIcons>
                      <ToolSep $mr={-6} />
                      <Settings size={24} strokeWidth={1.100} />
                      <Full />
                      <Camera size={26} strokeWidth={1.100} />
                    </ToolIcons>
                  </Toolbar>
                  <Strip />
                  <ChartArea>
                    <ToolCol>
                      <ToolSlot $on><Cross /></ToolSlot>
                      <ToolSlot><TrendLine /></ToolSlot>
                      <ToolSlot><Lines /></ToolSlot>
                      <ToolSlot><Brush /></ToolSlot>
                      <ToolSlot><Type size={24} strokeWidth={1} /></ToolSlot>
                      <ToolSlot><Nodes /></ToolSlot>
                      <ToolSlot><Fib /></ToolSlot>
                      <ToolSlot><Smile size={26} strokeWidth={1} /></ToolSlot>
                      <ToolRule />
                      <ToolSlot $h={36}><Ruler size={28} strokeWidth={1} /></ToolSlot>
                      <ToolSlot $h={40}><ZoomIn size={26} strokeWidth={1} /></ToolSlot>
                      <ToolRule />
                      <ToolSlot $h={36}><MagnetIco /></ToolSlot>
                      <ToolSlot $h={40}><PencilLock /></ToolSlot>
                      <ToolSlot $h={38}><LockOpen size={26} strokeWidth={1} /></ToolSlot>
                      <ToolSlot $h={36}><EyeBrush /></ToolSlot>
                      <ToolRule />
                    </ToolCol>
                    <Handle><ChevronLeft size={9} /></Handle>
                    <Stage>
                      <Chart />
                      <Legend>
                        <LegendTitle>ETH/USD · 5</LegendTitle>
                        <Live />
                        <Ohlc>
                          <span>O<Neg>1669.35</Neg></span><span>H<Neg>1671.48</Neg></span><span>L<Neg>1668.01</Neg></span><span>C<Neg>1668.49</Neg></span>
                          <Neg>−0.86 (−0.05%)</Neg>
                        </Ohlc>
                      </Legend>
                      <TvLogo><TvMark /></TvLogo>
                      <Quick>
                        <QHead><Dots /><span>Quick Order</span><ChevronUp size={17} strokeWidth={2.200} color="#e6e8ea" /></QHead>
                        <QTabs><OTab $active>Market Long</OTab><OTab>Market Short</OTab></QTabs>
                        <QBody>
                          <QInfo>
                            {qrows.map(([a, b]) => <Row key={a}><RowLabel>{a}</RowLabel><RowValue>{b}</RowValue></Row>)}
                          </QInfo>
                          <QFields>
                            <QLabel>Collateral</QLabel>
                            <QInput><QValue><span>$</span><span>0.0</span></QValue><span>USD</span></QInput>
                            <QLabel>Leverage</QLabel>
                            <QInput><span>1</span><span>x</span></QInput>
                          </QFields>
                        </QBody>
                        <QLong>Long</QLong>
                      </Quick>
                      <RangeRow>
                        <Range $on>6h</Range><Range>1d</Range><Range>3d</Range><Range>2w</Range><Range>3m</Range>
                        <RangeRight>
                          <Clock2>11:00:41 (UTC-4)</Clock2><ToolSep $ml={3} /><Pct>%</Pct><span>log</span><Tf $on>auto</Tf>
                        </RangeRight>
                      </RangeRow>
                    </Stage>
                  </ChartArea>
                  <Bottom>
                    <PosTop>
                      <PosTabs>
                        <PosTab $active>Open Positions<Badge $active>0</Badge></PosTab>
                        <PosTab>Open Orders<Badge>0</Badge></PosTab>
                        <PosTab>Closed Positions<Badge>0</Badge></PosTab>
                        <PosTab>Trade Activity<Badge>0</Badge></PosTab>
                      </PosTabs>
                      <MiniBtn><ChevronUp size={13} strokeWidth={2.500} /></MiniBtn>
                    </PosTop>
                    <Table>
                      <THead>{heads.map(h => <span key={h}>{h}</span>)}</THead>
                      <Empty>Connect your wallet to view positions</Empty>
                    </Table>
                  </Bottom>
                </Right>
              </Body>
              <Taskbar>
                <Weather>
                  <Thermo />
                  <div><div>26°C</div><WeatherSub>Gần mức kỷ lục</WeatherSub></div>
                </Weather>
                <WinLogo />
                <SearchPill><Search size={18} color="#222" />Search<PillGap /><Bing /></SearchPill>
                <AppSlot $w={52}><Meet /></AppSlot>
                <AppSlot $w={42} $on $mark="#4cc2ff"><ChromeIco /></AppSlot>
                <AppSlot $w={54} $mark="#8a8a8a"><Folder /></AppSlot>
                <AppSlot $w={38}><Bird /></AppSlot>
                <Tray>
                  <ChevronUp size={17} />
                  <Lang><div>ENG</div><div>US</div></Lang>
                  <TrayIcons><Wifi size={17} /><VolumeX size={16} /><Battery /></TrayIcons>
                  <Clock><div>10:00 PM</div><div>20/08/2023</div></Clock>
                  <Snooze />
                </Tray>
              </Taskbar>
            </Screen>
          </ScreenWrap>
          <Chin><ChinBadge><Castle />MarginATM</ChinBadge></Chin>
        </LidInner>
      </Lid>
      <Base><Notch /></Base>
      <Underside width={1920} height={34} viewBox="0 0 1920 34">
        <path d="M0 0H1920L1833 15 1740 26H180L86 15Z" fill="#1f1f1f" />
        <path d="M86 15Q140 14 178 25L155 29Q135 34 118 29Z M195 26h36l-8 2h-20Z" fill="#000" />
        <path d="M1834 15Q1780 14 1742 25L1765 29Q1785 34 1802 29Z M1725 26h-36l8 2h20Z" fill="#000" />
        <path d="M654 16q6-4 12 0z M1252 16q6-4 12 0z" fill="#8a8a8a" />
      </Underside>
    </Page>
  );
}
